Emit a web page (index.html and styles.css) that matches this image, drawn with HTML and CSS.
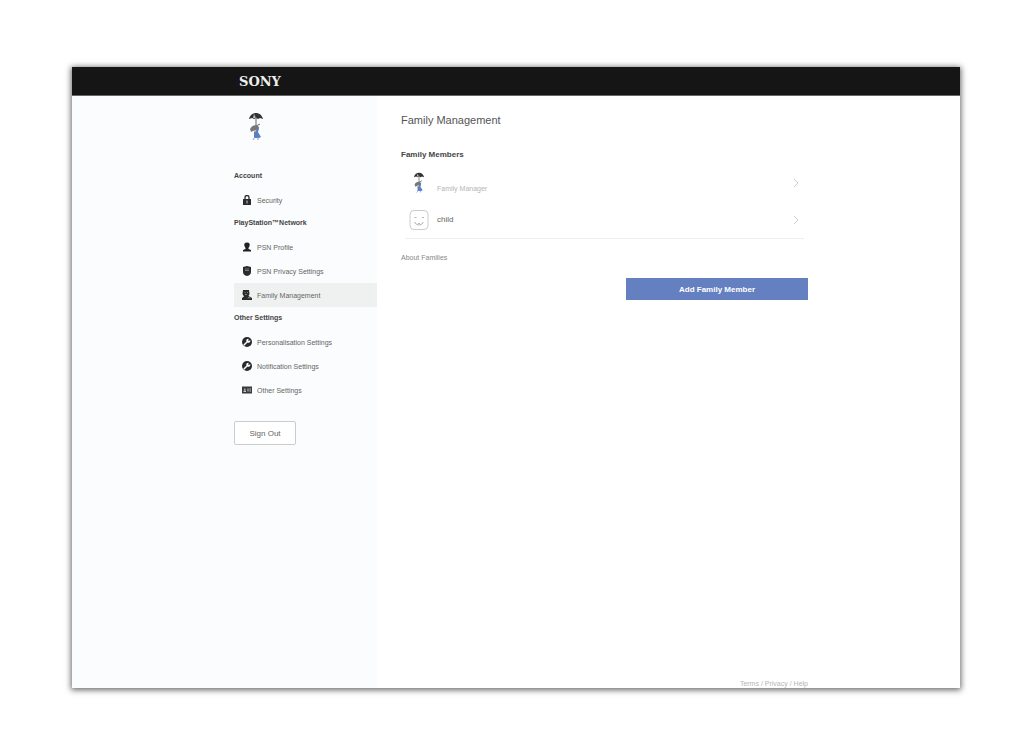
FILE: index.html
```html
<!DOCTYPE html>
<html lang="en">

<head>
    <meta charset="UTF-8">
    <meta name="viewport" content="width=device-width, initial-scale=1.0">
    <title>Family Management</title>
    <link rel="stylesheet" href="styles.css">
</head>

<body>
    <!-- shared icons -->
    <svg class="sprite" aria-hidden="true">
        <symbol id="avatar" viewBox="0 0 16 30">
            <path d="M1 7C2 3 5 1 8 1s6 2 7 6l-3-1-2 1-2-1-2 1-2-1z" fill="#333" />
            <path d="M5 6l1-4 2 4z" fill="#bbb" />
            <path d="M8 5v10M8 14l4-2" stroke="#666" fill="none" />
            <path d="M2 17c2-4 6-5 9-2l-1 4-3-1-4 2z" fill="#777" />
            <path d="M6 19l3-1 1-3 1 1-1 4 3 5-2 1H6z" fill="#5b7fc7" />
            <path d="M6 18h2v2H6z" fill="#c9a99b" />
            <path d="M7 25l-2 3M10 25v3" stroke="#9299b0" fill="none" />
        </symbol>
        <symbol id="wrench" viewBox="0 0 10 10">
            <circle cx="5" cy="5" r="5" fill="#2b2b2b" />
            <path d="M2 8l3-3" stroke="#fff" stroke-width="1.4" stroke-linecap="round" />
            <path d="M4.400 4.500a2 2 0 0 1 2.600-2.600L5.900 3.100l1 1 1.300-1.100a2 2 0 0 1-2.700 2.600z" fill="#fff" />
        </symbol>
    </svg>

    <div class="window">
        <header class="header">
            <a class="logo" href="#">SONY</a>
        </header>
        <div class="content">
            <nav class="sidebar">
                <svg class="avatar"><use href="#avatar" /></svg>

                <h2>Account</h2>
                <a class="item" href="#">
                    <svg class="icon" viewBox="0 0 10 10">
                        <path d="M3 5V2.500a2 2 0 0 1 4 0V5" fill="none" stroke="#2b2b2b" stroke-width="1.300" />
                        <path d="M1 4h8v6H1z" fill="#2b2b2b" />
                        <path d="M4.500 5.500h1v3h-1z" fill="#ccc" />
                    </svg>
                    Security
                </a>

                <h2>PlayStation™Network</h2>
                <a class="item" href="#">
                    <svg class="icon" viewBox="0 0 10 10">
                        <path d="M5 .500C7.500 .500 8 2 7.600 4L6.500 6v1L9 8v1.500H1V8l2.500-1V6L2.400 4C2 2 2.500 .500 5 .500z" fill="#222" />
                    </svg>
                    PSN Profile
                </a>
                <a class="item" href="#">
                    <svg class="icon" viewBox="0 0 10 10">
                        <path d="M1 1l4-1 4 1v5q0 3-4 4-4-1-4-4z" fill="#2b2b2b" />
                        <path d="M3 3h4M3 4.500h4" stroke="#999" stroke-width=".7" />
                    </svg>
                    PSN Privacy Settings
                </a>
                <a class="item active" href="#">
                    <svg class="icon" viewBox="0 0 10 10">
                        <path d="M1 0h6l.500 4-1 2L10 8v2H0V8l2-1.500L.500 4z" fill="#2b2b2b" />
                        <path d="M2.500 2.500h1M5 2.500h1M3 4.500h2M6 8.500l1-1.500 1 1.500" fill="none" stroke="#aaa" stroke-width=".7" />
                    </svg>
                    Family Management
                </a>

                <h2>Other Settings</h2>
                <a class="item" href="#">
                    <svg class="icon"><use href="#wrench" /></svg>
                    Personalisation Settings
                </a>
                <a class="item" href="#">
                    <svg class="icon"><use href="#wrench" /></svg>
                    Notification Settings
                </a>
                <a class="item" href="#">
                    <svg class="icon" viewBox="0 0 10 10">
                        <path d="M0 1.500h10v7H0z" fill="#3a3a3a" />
                        <path d="M1.500 7V5.500h2.500V7zM2.200 3.500h1.200v1.500H2.200zM5.500 3.500h1v3h-1zM7.500 3.500H9v1H7.500zM7.500 5.500H9v1H7.500z" fill="#ccc" />
                    </svg>
                    Other Settings
                </a>

                <button class="signout" type="button">Sign Out</button>
            </nav>

            <main class="main">
                <h1>Family Management</h1>
                <h3>Family Members</h3>
                <div class="members">
                    <a class="member" href="#">
                        <svg class="photo" viewBox="0 0 20 22"><use href="#avatar" width="20" height="22" /></svg>
                        <span class="role">Family Manager</span>
                        <svg class="arrow" viewBox="0 0 6 10"><path d="M1 1l4 4-4 4" /></svg>
                    </a>
                    <a class="member" href="#">
                        <svg class="photo" viewBox="0 0 20 22" fill="none" stroke="#ccc">
                            <rect x="1" y="1.500" width="18" height="19" rx="4" />
                            <path d="M5.500 8.500h2M13 8.500h2M6 13v1q4 4 8 0v-1M9 14.500h2" stroke="#b5b5b5" />
                        </svg>
                        <span class="name">child</span>
                        <svg class="arrow" viewBox="0 0 6 10"><path d="M1 1l4 4-4 4" /></svg>
                    </a>
                </div>
                <a class="about" href="#">About Families</a>
                <button class="add" type="button">Add Family Member</button>
                <footer class="footer">
                    <a href="#">Terms</a> / <a href="#">Privacy</a> / <a href="#">Help</a>
                </footer>
            </main>
        </div>
    </div>
</body>

</html>
```
FILE: styles.css
```css
* {
    margin: 0;
    padding: 0;
    box-sizing: border-box;
}

body {
    display: flex;
    min-height: 100vh;
    padding: 67px 64px 44px 72px;
    background: #fff;
    font-family: "Liberation Sans", Arial, sans-serif;
    font-size: 7px;
    color: #666;
}

a {
    color: inherit;
    text-decoration: none;
}

button {
    font-family: inherit;
    cursor: pointer;
}

.sprite {
    position: absolute;
    width: 0;
    height: 0;
}

.window {
    flex: 1;
    display: flex;
    flex-direction: column;
    background: #fff;
    box-shadow: 0 1px 6px 1px rgba(0, 0, 0, .6);
}

.header {
    display: flex;
    align-items: center;
    height: 29px;
    padding-left: 167px;
    background: #151515;
    border-bottom: 1px solid #666;
}

.logo {
    color: #eee;
    font-family: "DejaVu Serif", serif;
    font-size: 13px;
    font-weight: bold;
}

.content {
    flex: 1;
    display: flex;
}

.sidebar {
    flex: 0 0 305px;
    padding: 16px 0 16px 162px;
    background: #fafcfd;
}

.avatar {
    display: block;
    width: 16px;
    height: 30px;
    margin: 0 0 23px 14px;
}

.sidebar h2 {
    height: 23px;
    font-size: 7px;
    line-height: 21px;
    color: #444;
}

.item {
    display: flex;
    align-items: center;
    gap: 5px;
    height: 24px;
    padding-left: 8px;
}

.active {
    background: #eff1f1;
}

.icon {
    width: 10px;
    height: 10px;
}

.signout {
    width: 62px;
    height: 24px;
    margin-top: 19px;
    background: #fff;
    border: 1px solid #ccc;
    border-radius: 2px;
    font-size: 8px;
    color: #666;
}

.main {
    flex: 0 1 431px;
    display: flex;
    flex-direction: column;
    padding: 16px 0 0 24px;
}

.main h1 {
    font-size: 11px;
    font-weight: normal;
    line-height: 16px;
    color: #555;
}

.main h3 {
    margin-top: 21px;
    font-size: 8px;
    line-height: 12px;
    color: #444;
}

.members {
    margin: 3px 4px 0;
    border-bottom: 1px solid #eee;
}

.member {
    display: flex;
    align-items: center;
    gap: 8px;
    height: 37px;
    padding: 0 5px 0 4px;
}

.photo {
    width: 20px;
    height: 22px;
}

.role {
    padding-top: 12px;
    color: #b5b5b5;
}

.name {
    font-size: 8px;
}

.arrow {
    width: 6px;
    height: 10px;
    margin-left: auto;
    fill: none;
    stroke: #ccc;
}

.about {
    align-self: flex-start;
    margin-top: 13px;
    line-height: 12px;
    color: #888;
}

.add {
    align-self: flex-end;
    width: 182px;
    height: 22px;
    margin-top: 14px;
    background: #6480c1;
    border: 0;
    font-size: 8px;
    font-weight: bold;
    color: #fff;
}

.footer {
    margin-top: auto;
    line-height: 8px;
    text-align: right;
    color: #b5b5b5;
}
```
